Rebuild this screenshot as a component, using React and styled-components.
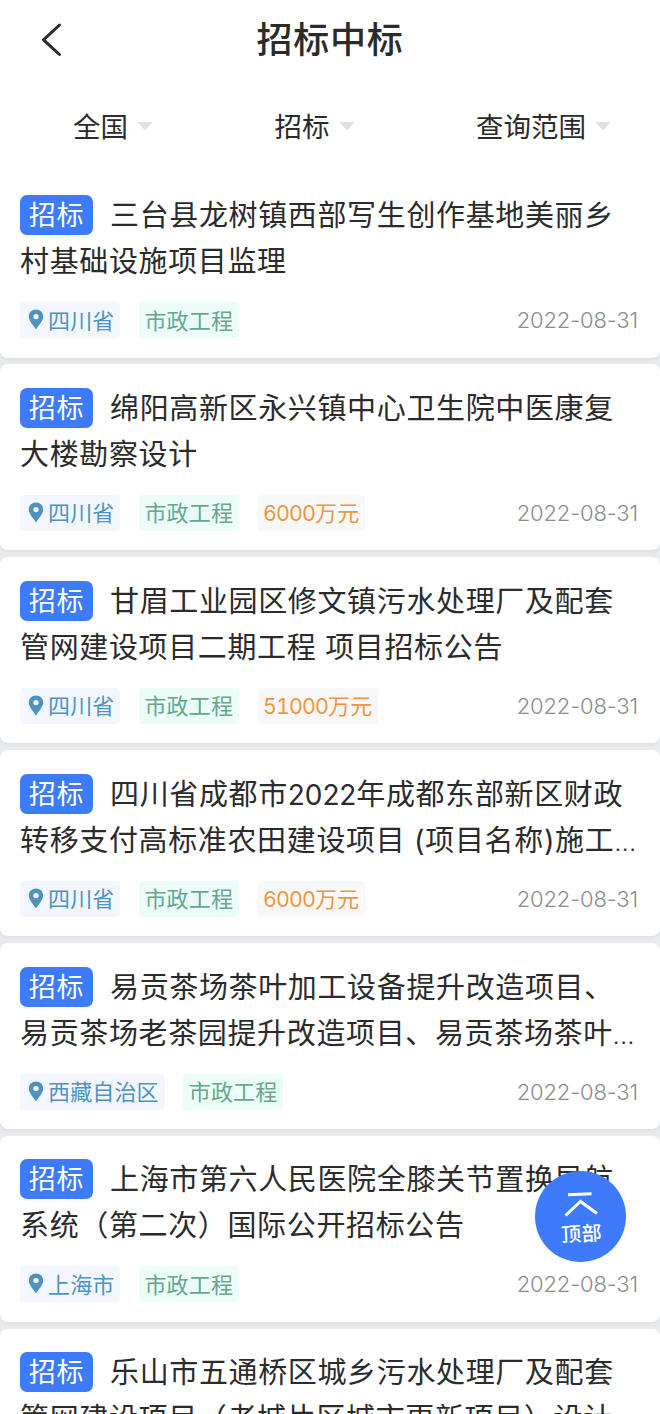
import React from 'react';
import styled, { createGlobalStyle } from 'styled-components';

const GlobalStyle = createGlobalStyle`
  * { box-sizing: border-box; }
  body {
    margin: 0;
    background: #e9ecee;
    font-family: Inter, "Noto Sans CJK SC", sans-serif;
    color: #2b2b2b;
  }
`;

const Page = styled.div`
  position: relative;
  width: 660px;
  height: 1414px;
  overflow: hidden;
`;

const Top = styled.header`
  background: #fff;
`;

const TitleBar = styled.div`
  position: relative;
  display: flex;
  align-items: center;
  justify-content: center;
  height: 80px;
`;

const BackButton = styled.button`
  position: absolute;
  left: 40px;
  top: 20px;
  width: 24px;
  height: 40px;
  padding: 0;
  border: 0;
  background: none;
  svg { display: block; }
`;

const PageTitle = styled.h1`
  margin: 0;
  font-size: 36px;
  font-weight: 500;
  line-height: 80px;
  letter-spacing: 0.8px;
`;

const Filters = styled.nav`
  display: flex;
  justify-content: space-between;
  height: 91.5px;
  padding: 0 49px 0 73px;
`;

const Filter = styled.div`
  display: flex;
  align-items: center;
  gap: 9px;
  height: 92px;
  font-size: 27.5px;
  svg { display: block; }
`;

const FilterName = styled.span`
  padding-bottom: 3px;
`;

const List = styled.main`
  display: flex;
  flex-direction: column;
  gap: 6.9px;
`;

const Card = styled.article`
  flex: none;
  height: 186px;
  padding: 20.5px 20px 19.5px;
  background: #fff;
  border-radius: ${(p) => (p.$first ? '0 0 8px 8px' : '8px')};
  box-shadow: 0 2px 3px rgba(60, 70, 80, 0.06);
`;

const Heading = styled.h2`
  margin: 0 0 18px;
  font-size: 29px;
  font-weight: 400;
  letter-spacing: 0.64px;
`;

const Line = styled.span`
  display: flex;
  align-items: center;
  height: 46px;
  white-space: pre;
`;

const LineText = styled.span`
  padding-bottom: 4px;
`;

const Figure = styled.span`
  font-size: 28px;
  letter-spacing: -0.1px;
`;

const Dots = styled.span`
  font-size: 24px;
  font-weight: 300;
  letter-spacing: 0.6px;
`;

const Kind = styled.span`
  flex: none;
  width: 73px;
  height: 40px;
  margin-right: 17px;
  border-radius: 7px;
  background: #3d7bfb;
  color: #fff;
  font-size: 27px;
  line-height: 41px;
  text-align: center;
`;

const Meta = styled.div`
  display: flex;
  align-items: center;
  gap: 18.5px;
  height: 36px;
`;

const tones = {
  place: ['#f3f6fd', '#4c93c2'],
  sort: ['#ecfcf6', '#66a78e'],
  price: ['#f8f8f8', '#ef9642'],
};

const Tag = styled.span`
  display: flex;
  align-items: center;
  height: 36px;
  padding: 1px 6px 0 ${(p) => (p.$tone === 'place' ? 8 : 5.5)}px;
  border-radius: 4px;
  background: ${(p) => tones[p.$tone][0]};
  color: ${(p) => tones[p.$tone][1]};
  font-size: 22px;
  line-height: 34px;
  letter-spacing: 0.15px;
  white-space: nowrap;
  svg { margin: -2px 4px 0 0; }
`;

const Amount = styled.span`
  font-size: 21.5px;
  font-variant-numeric: tabular-nums;
  letter-spacing: -0.95px;
`;

const DateText = styled.time`
  margin-left: auto;
  margin-right: 2px;
  color: #8c8c8c;
  font-size: 22px;
  font-weight: 350;
  letter-spacing: -0.15px;
`;

const TopButton = styled.button`
  position: absolute;
  left: 535px;
  top: 1171px;
  display: flex;
  flex-direction: column;
  align-items: center;
  width: 91px;
  height: 91px;
  padding: 20px 0 0;
  border: 0;
  border-radius: 50%;
  background: #3d7bfb;
  color: #fff;
  font: 500 20px/26px "Noto Sans CJK SC", sans-serif;
  svg { display: block; margin-bottom: 3px; }
`;

const TopLabel = styled.span`
  padding-left: 2px;
  letter-spacing: 0.5px;
  transform: rotate(-3deg);
`;

const Caret = () => (
  <svg width="16" height="9" viewBox="0 0 16 9"><path d="M0.500 0h15L8 8.500z" fill="#e0e0e0" /></svg>
);

const Pin = () => (
  <svg width="16" height="21" viewBox="0 0 16 21">
    <path fillRule="evenodd" fill="#4c93c2" d="M8 .5C3.7.5.8 3.600.8 7.600.8 12 5 16 8 20.500 11 16 15.200 12 15.200 7.600 15.200 3.600 12.300.5 8 .5ZM8 4.900a2.700 2.700 0 1 1 0 5.400 2.700 2.700 0 0 1 0-5.400Z" />
  </svg>
);

const notices = [
  { lines: ['三台县龙树镇西部写生创作基地美丽乡', '村基础设施项目监理'], place: '四川省' },
  { lines: ['绵阳高新区永兴镇中心卫生院中医康复', '大楼勘察设计'], place: '四川省', amount: '6000' },
  { lines: ['甘眉工业园区修文镇污水处理厂及配套', '管网建设项目二期工程 项目招标公告'], place: '四川省', amount: '51000' },
  {
    lines: [<>四川省成都市<Figure>2022</Figure>年成都东部新区财政</>, '转移支付高标准农田建设项目 (项目名称)施工'],
    clipped: true,
    place: '四川省',
    amount: '6000',
  },
  { lines: ['易贡茶场茶叶加工设备提升改造项目、', '易贡茶场老茶园提升改造项目、易贡茶场茶叶'], clipped: true, place: '西藏自治区' },
  { lines: ['上海市第六人民医院全膝关节置换导航', '系统（第二次）国际公开招标公告'], place: '上海市' },
  { lines: ['乐山市五通桥区城乡污水处理厂及配套', '管网建设项目（老城片区城市更新项目）设计'], place: '四川省' },
];

export default function App() {
  return (
    <Page>
      <GlobalStyle />
      <Top>
        <TitleBar>
          <BackButton aria-label="返回">
            <svg width="24" height="40" viewBox="0 0 24 40" fill="none" stroke="#2b2b2b" strokeWidth="3" strokeLinecap="round" strokeLinejoin="round">
              <path d="M19.500 5 3.500 19.800 19.500 34.500" />
            </svg>
          </BackButton>
          <PageTitle>招标中标</PageTitle>
        </TitleBar>
        <Filters>
          {['全国', '招标', '查询范围'].map((name) => (
            <Filter key={name}><FilterName>{name}</FilterName><Caret /></Filter>
          ))}
        </Filters>
      </Top>
      <List>
        {notices.map((n, i) => (
          <Card key={i} $first={i === 0}>
            <Heading>
              <Line><Kind>招标</Kind><LineText>{n.lines[0]}</LineText></Line>
              <Line><LineText>{n.lines[1]}{n.clipped && <Dots>...</Dots>}</LineText></Line>
            </Heading>
            <Meta>
              <Tag $tone="place"><Pin />{n.place}</Tag>
              <Tag $tone="sort">市政工程</Tag>
              {n.amount && <Tag $tone="price"><Amount>{n.amount}</Amount>万元</Tag>}
              <DateText>2022-08-31</DateText>
            </Meta>
          </Card>
        ))}
      </List>
      <TopButton>
        <svg width="36" height="26" viewBox="0 0 36 26" fill="none" stroke="#fff" strokeWidth="3">
          <path d="M5 3.800 28.500 2.800M2.500 24.500 17.500 10.500 34 22.500" />
        </svg>
        <TopLabel>顶部</TopLabel>
      </TopButton>
    </Page>
  );
}
